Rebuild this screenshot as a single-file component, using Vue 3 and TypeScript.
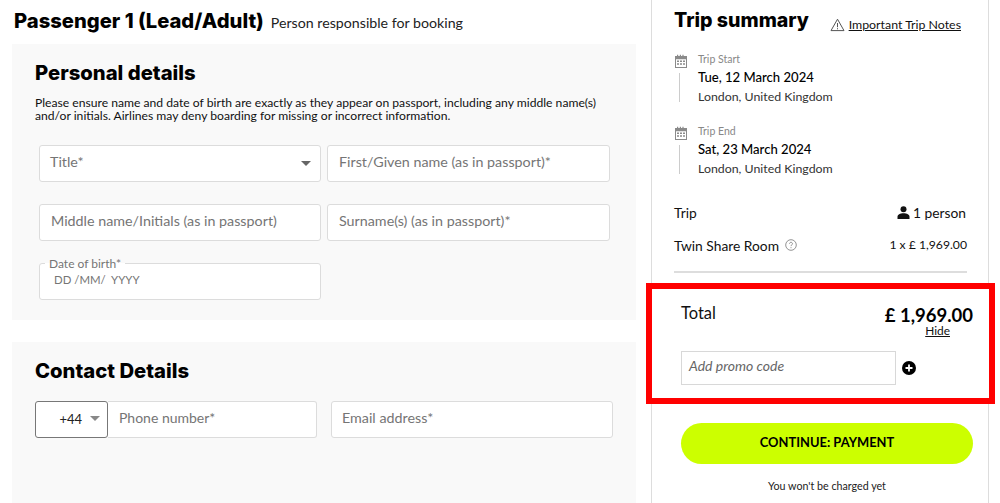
<script setup lang="ts">
interface Stop { label: string; date: string; place: string }
const stops: Stop[] = [
  { label: 'Trip Start', date: 'Tue, 12 March 2024', place: 'London, United Kingdom' },
  { label: 'Trip End', date: 'Sat, 23 March 2024', place: 'London, United Kingdom' },
]
</script>

<template>
  <div class="page">
    <main class="left">
      <header class="pax">
        <h1>Passenger 1 (Lead/Adult)</h1>
        <span>Person responsible for booking</span>
      </header>

      <section class="card personal">
        <h2>Personal details</h2>
        <p class="note">Please ensure name and date of birth are exactly as they appear on passport, including any middle name(s) and/or initials. Airlines may deny boarding for missing or incorrect information.</p>
        <div class="grid">
          <div class="field select">Title*<i class="caret"></i></div>
          <div class="field">First/Given name (as in passport)*</div>
          <div class="field">Middle name/Initials (as in passport)</div>
          <div class="field">Surname(s) (as in passport)*</div>
          <div class="field dob">
            <span class="legend">Date of birth*</span>
            <span class="dob-mask">DD /MM/&nbsp; YYYY</span>
          </div>
        </div>
      </section>

      <section class="card contact">
        <h2>Contact Details</h2>
        <div class="contact-row">
          <div class="code">+44<i class="caret"></i></div>
          <div class="field phone">Phone number*</div>
          <div class="field email">Email address*</div>
        </div>
      </section>
    </main>

    <aside class="summary">
      <div class="summary-head">
        <h2>Trip summary</h2>
        <div class="notes-link">
          <svg width="15" height="14" viewBox="0 0 15 14" fill="none" stroke="#555" stroke-width="1">
            <path d="M7.5 1.2 14 12.6H1z" stroke-linejoin="round" />
            <path d="M7.5 5v4.2M7.5 10.2v1.1" />
          </svg>
          <span>Important Trip Notes</span>
        </div>
      </div>

      <div v-for="s in stops" :key="s.label" class="stop">
        <div class="stop-rail">
          <svg class="cal" width="14" height="14" viewBox="0 0 14 14">
            <path fill="#8a8a8a" d="M1 2h2V.8h1.2V2h1.6V.8H7V2h1.4V.8h1.2V2H13v12H1zM2 5.2V13h10V5.2z" />
            <path fill="#8a8a8a" d="M3 6.4h2v1.6H3zM6 6.4h2v1.6H6zM9 6.4h2v1.6H9zM3 9.2h2v1.6H3zM6 9.2h2v1.6H6zM9 9.2h2v1.6H9z" />
          </svg>
          <i class="rail-line"></i>
        </div>
        <div class="stop-text">
          <div class="stop-label">{{ s.label }}</div>
          <div class="stop-date">{{ s.date }}</div>
          <div class="stop-place">{{ s.place }}</div>
        </div>
      </div>

      <div class="line trip">
        <span>Trip</span>
        <span class="people">
          <svg width="13" height="13" viewBox="0 0 13 13" fill="#111">
            <circle cx="6.5" cy="3.2" r="3" />
            <path d="M.5 13v-2.2C.5 8.6 3 7.2 6.5 7.2s6 1.4 6 3.6V13z" />
          </svg>
          1 person
        </span>
      </div>
      <div class="line room">
        <span class="room-name">Twin Share Room
          <svg width="12" height="12" viewBox="0 0 12 12" fill="none" stroke="#777" stroke-width=".8">
            <circle cx="6" cy="6" r="5.3" />
            <path d="M4.5 4.8c0-2 3-2 3 0 0 1.1-1.5 1-1.5 2.3M6 8.2v1" />
          </svg>
        </span>
        <span class="room-price">1 x £ 1,969.00</span>
      </div>
      <hr class="rule" />

      <div class="total-box">
        <div class="total-row">
          <span class="total-label">Total</span>
          <div class="total-right">
            <strong>£ 1,969.00</strong>
            <a>Hide</a>
          </div>
        </div>
        <div class="promo-row">
          <div class="promo">Add promo code</div>
          <svg width="14" height="14" viewBox="0 0 14 14">
            <circle cx="7" cy="7" r="7" fill="#000" />
            <path d="M7 3.5v7M3.5 7h7" stroke="#fff" stroke-width="1.8" />
          </svg>
        </div>
      </div>

      <button class="cta" type="button">CONTINUE: PAYMENT</button>
      <p class="charged">You won't be charged yet</p>
    </aside>
  </div>
</template>

<style>
html, body { margin: 0; background: #fff; overflow: hidden; }
</style>

<style scoped>
.page {
  display: flex;
  width: 1000px;
  height: 503px;
  overflow: hidden;
  font-family: Lato, "Noto Sans", sans-serif;
  color: #111;
  background: #fff;
}
.left {
  width: 624px;
  margin-left: 12px;
  display: flex;
  flex-direction: column;
}
.pax {
  height: 44px;
  flex: none;
  padding: 9px 0 0 2px;
  box-sizing: border-box;
  display: flex;
  align-items: baseline;
  gap: 7px;
}
.pax h1 {
  margin: 0;
  font: 800 20.2px/24px Inter, sans-serif;
  color: #000;
}
.pax span { font-size: 14.2px; color: #222; }
.card {
  background: #f9f9f9;
  padding: 0 23px;
  box-sizing: border-box;
}
.card h2 {
  margin: 0;
  font: 800 20.25px/24px Inter, sans-serif;
  color: #000;
}
.personal { height: 276px; flex: none; padding-top: 17px; }
.note {
  margin: 11px 0 0;
  font-size: 12.15px;
  line-height: 13px;
  color: #111;
  width: 572px;
}
.grid {
  margin: 23px 0 0 4px;
  display: grid;
  grid-template-columns: 282px 283px;
  grid-auto-rows: 37px;
  column-gap: 6px;
  row-gap: 22px;
}
.field {
  position: relative;
  background: #fff;
  border: 1px solid #dcdcdc;
  border-radius: 3px;
  box-sizing: border-box;
  padding: 6px 11px 0;
  font-size: 14.3px;
  line-height: 20px;
  color: #757575;
}
.select { display: flex; justify-content: space-between; padding-left: 10px; }
.caret {
  display: block;
  width: 0;
  height: 0;
  border-left: 5px solid transparent;
  border-right: 5px solid transparent;
  border-top: 5px solid #666;
}
.select .caret { margin: 9px -2px 0 0; }
.dob { padding: 5px 14px 0; }
.legend {
  position: absolute;
  left: 5px;
  top: -7px;
  padding: 0 4px;
  font-size: 12px;
  line-height: 13px;
  background: linear-gradient(#f9f9f9 50%, #fff 50%);
}
.dob-mask { font-size: 11.4px; line-height: 20px; }
.contact { margin-top: 22px; flex: 1; padding-top: 17px; }
.contact-row { display: flex; margin-top: 18px; height: 37px; }
.code {
  width: 73px;
  flex: none;
  box-sizing: border-box;
  border: 1px solid #777;
  border-radius: 3px;
  background: #fff;
  display: flex;
  align-items: center;
  justify-content: flex-end;
  gap: 8px;
  padding: 0 7px 2px 0;
  font-size: 13px;
  color: #222;
}
.code .caret { border-top-color: #888; }
.phone { width: 209px; border-left: 0; border-radius: 0 3px 3px 0; padding-left: 11px; font-size: 14px; }
.email { width: 282px; margin-left: 14px; padding-left: 10px; font-size: 14.3px; }

.summary {
  position: relative;
  margin-left: 15px;
  width: 338px;
  height: 503px;
  box-sizing: border-box;
  border-left: 1px solid #ddd;
  border-right: 1px solid #ddd;
  padding: 0 21px 0 22px;
  flex: none;
}
.summary-head {
  height: 44px;
  display: flex;
  align-items: flex-start;
  justify-content: space-between;
  padding-top: 8px;
  box-sizing: border-box;
}
.summary-head h2 {
  margin: 0;
  font: 800 19.6px/24px Inter, sans-serif;
  color: #000;
}
.notes-link {
  display: flex;
  align-items: center;
  gap: 4px;
  margin-top: 9px;
  padding-right: 6px;
  font-size: 12.35px;
  line-height: 15px;
}
.notes-link span { text-decoration: underline; }
.stop { display: flex; height: 72px; padding-top: 9px; box-sizing: border-box; }
.stop-rail { width: 24px; flex: none; display: flex; flex-direction: column; }
.cal { margin-top: 1px; }
.rail-line { display: block; width: 1px; height: 29px; margin: 5px 0 0 5px; background: #ccc; }
.stop-text { display: flex; flex-direction: column; }
.stop-label { font-size: 10.5px; line-height: 12px; color: #888; }
.stop-date { margin-top: 3px; font-size: 13.1px; line-height: 19px; font-weight: 500; color: #000; }
.stop-place { margin-top: 1px; font-size: 12.35px; line-height: 18px; color: #333; }
.line { display: flex; justify-content: space-between; font-size: 13.8px; align-items: center; }
.trip { height: 20px; margin-top: 14px; padding-right: 1px; }
.people { display: inline-flex; align-items: center; gap: 3px; }
.room { height: 20px; margin-top: 13px; padding-right: 1px; }
.room-name { display: inline-flex; align-items: center; gap: 6px; }
.room-price { font-size: 12.2px; margin: -2px -1px 0 0; }
.rule { margin: 16px 0 0; border: 0; height: 2px; background: #ddd; }
.total-box {
  margin: 10px -28px 0 -28px;
  height: 121px;
  box-sizing: border-box;
  border: 6px solid #f00;
  padding: 10px 16px 0 29px;
  background: #fff;
}
.total-row { display: flex; justify-content: space-between; align-items: flex-start; }
.total-label { font-size: 16.5px; line-height: 28px; }
.total-right { display: flex; flex-direction: column; align-items: flex-end; }
.total-right strong { font-size: 18.5px; line-height: 20px; font-weight: 700; color: #000; margin-top: 6px; }
.total-right a { font-size: 11.9px; line-height: 12px; text-decoration: underline; margin-right: 23px; }
.promo-row { display: flex; align-items: center; gap: 6px; margin-top: 14px; }
.promo {
  width: 215px;
  height: 34px;
  box-sizing: border-box;
  border: 1px solid #d8d8d8;
  padding: 4px 7px;
  font-size: 14px;
  line-height: 20px;
  font-style: italic;
  color: #666;
}
.cta {
  display: block;
  margin: 19px 0 0 7px;
  width: 292px;
  height: 41px;
  border: 0;
  border-radius: 21px;
  background: #ccff00;
  font: 700 12.9px/39px Lato, sans-serif;
  color: #000;
  padding: 0 0 2px;
}
.charged { margin: 15px 0 0 7px; width: 292px; text-align: center; font-size: 10.7px; line-height: 14px; color: #222; }
</style>
